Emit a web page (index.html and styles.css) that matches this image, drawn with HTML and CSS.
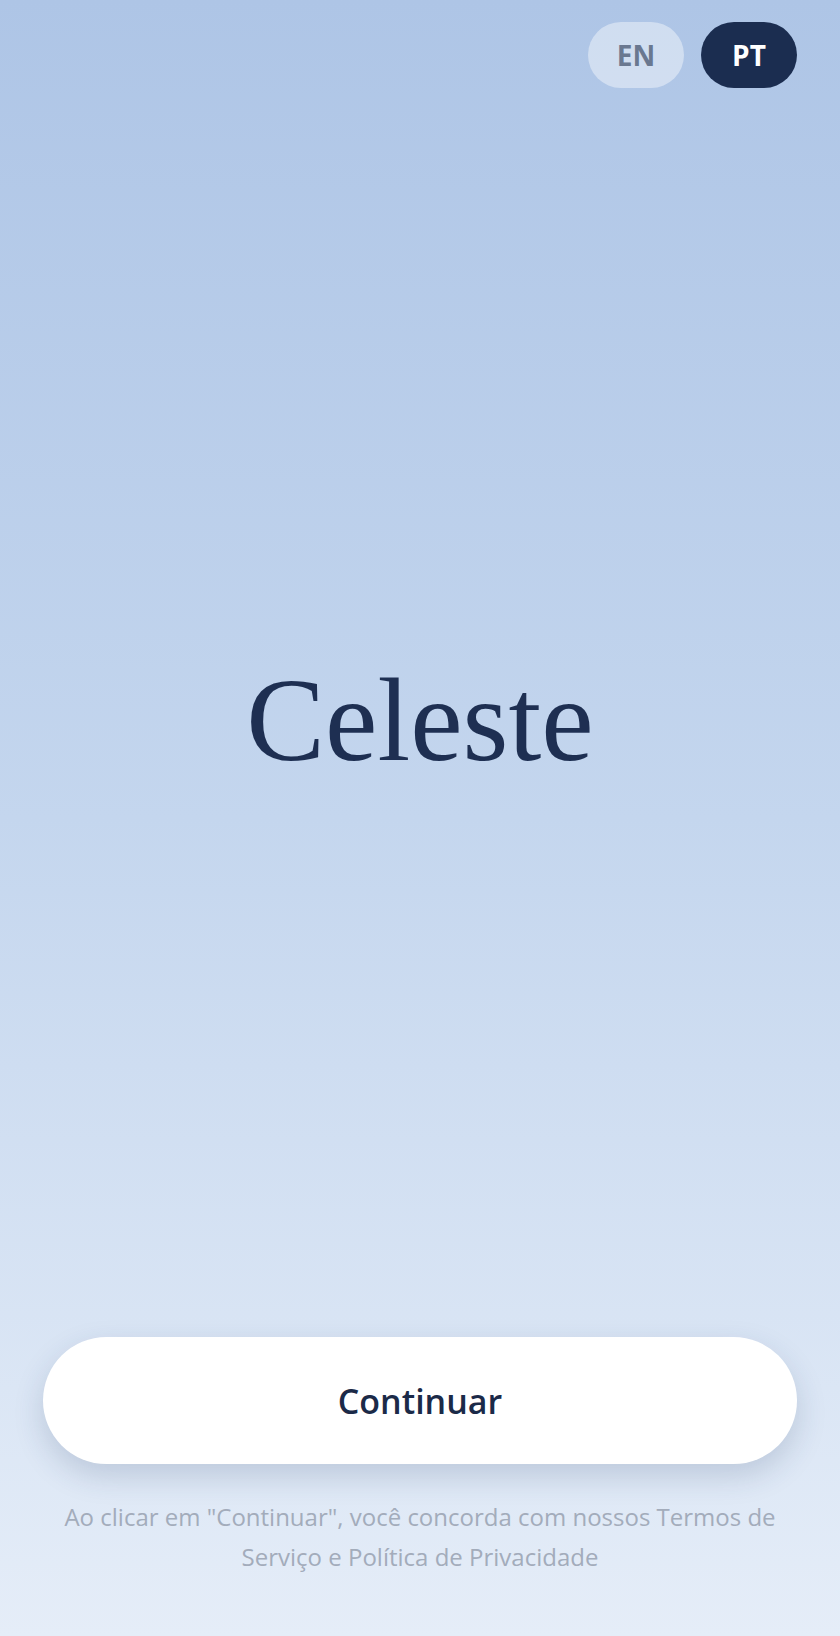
FILE: index.html
```html
<!DOCTYPE html>
<html lang="pt">
<head>
    <meta charset="UTF-8">
    <meta name="viewport" content="width=device-width, initial-scale=1.0">
    <title>Celeste</title>
    <link rel="stylesheet" href="styles.css">
</head>
<body>
    <div class="screen">
        <header class="lang-bar">
            <button class="lang-btn">EN</button>
            <button class="lang-btn active">PT</button>
        </header>

        <main class="hero">
            <h1 class="logo">Celeste</h1>
        </main>

        <footer class="actions">
            <button class="continue-btn">Continuar</button>
            <p class="terms">Ao clicar em "Continuar", você concorda com nossos Termos de Serviço e Política de Privacidade</p>
        </footer>
    </div>
</body>
</html>
```

FILE: styles.css
```css
html, body {
    margin: 0;
    padding: 0;
}

body {
    font-family: 'Open Sans', 'Noto Sans', sans-serif;
    background: linear-gradient(to bottom, #aec5e6 0%, #c4d6ee 50%, #e5edf8 100%);
    min-height: 100vh;
    color: #1c2d50;
}

.screen {
    min-height: 100vh;
    display: flex;
    flex-direction: column;
    box-sizing: border-box;
}

.lang-bar {
    display: flex;
    justify-content: flex-end;
    gap: 17px;
    padding: 22px 43px 0;
}

.lang-btn {
    font-family: 'Open Sans', sans-serif;
    font-weight: 700;
    font-size: 28px;
    height: 66px;
    min-width: 96px;
    padding: 0 26px;
    border: none;
    border-radius: 33px;
    background: rgba(255, 255, 255, 0.42);
    color: #6a7890;
    cursor: pointer;
}

.lang-btn.active {
    background: #1b2d50;
    color: #ffffff;
}

.hero {
    flex: 1;
    display: flex;
    align-items: center;
    justify-content: center;
    padding-top: 16px;
}

.logo {
    margin: 0;
    font-family: 'Liberation Serif', 'Times New Roman', serif;
    font-weight: 400;
    font-size: 118px;
    color: #1e2f52;
}

.actions {
    padding: 0 43px 59px;
    display: flex;
    flex-direction: column;
    align-items: center;
}

.continue-btn {
    width: 100%;
    height: 127px;
    border: none;
    border-radius: 64px;
    background: #ffffff;
    color: #1b2a48;
    font-family: 'Open Sans', sans-serif;
    font-weight: 600;
    font-size: 34px;
    box-shadow: 0 12px 30px rgba(40, 60, 100, 0.18);
    cursor: pointer;
}

.terms {
    margin: 33px 0 0;
    padding: 0 8px;
    text-align: center;
    font-size: 24px;
    line-height: 40px;
    color: #a3acbb;
}
```
